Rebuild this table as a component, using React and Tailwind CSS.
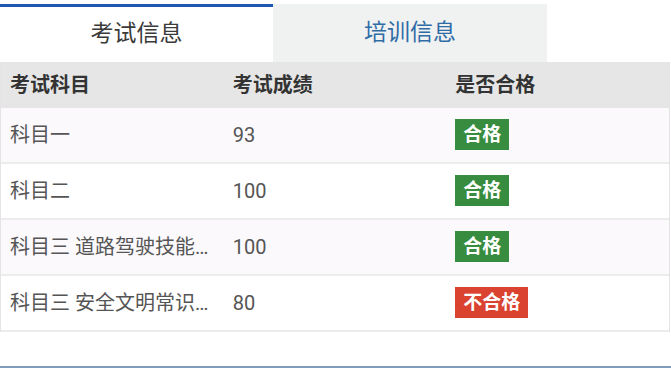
import React from 'react'

const rows = [
  { name: '科目一', score: '93', pass: true },
  { name: '科目二', score: '100', pass: true },
  { name: '科目三 道路驾驶技能考试', score: '100', pass: true },
  { name: '科目三 安全文明常识考试', score: '80', pass: false },
]

function Badge({ pass }) {
  return pass ? (
    <span className="inline-block h-[31px] leading-[31px] px-2 bg-[#378c3f] text-white text-[19px] font-bold">合格</span>
  ) : (
    <span className="inline-block h-[31px] leading-[31px] px-2 bg-[#d9432f] text-white text-[19px] font-bold">不合格</span>
  )
}

export default function App() {
  return (
    <div
      className="w-[671px] h-[368px] bg-white flex flex-col overflow-hidden"
      style={{ fontFamily: 'Roboto, "Noto Sans CJK SC", sans-serif' }}
    >
      <div className="h-[4px] bg-white" />
      <div className="flex h-[58px]">
        <div className="w-[273px] border-t-[3px] border-[#1f56b3] bg-white flex items-center justify-center text-[23px] text-[#3a3a3a]">
          考试信息
        </div>
        <div className="w-[274px] bg-[#f0f1f1] flex items-center justify-center text-[23px] text-[#2f6ca6]">
          培训信息
        </div>
      </div>

      <div className="w-[670px] border-x border-[#e4e4e4]">
        <div className="grid grid-cols-3 h-[46px] bg-[#e6e6e6] items-center text-[20px] font-bold text-[#333]">
          <div className="pl-[9px]">考试科目</div>
          <div className="pl-[9px]">考试成绩</div>
          <div className="pl-[9px]">是否合格</div>
        </div>
        {rows.map((r, i) => (
          <div
            key={i}
            className={
              'grid grid-cols-3 h-[56px] items-center border-b-2 border-[#ececec] text-[20px] text-[#555] ' +
              (i % 2 === 0 ? 'bg-[#fbf9fc]' : 'bg-white')
            }
          >
            <div className="pl-[9px] pr-[10px] truncate">{r.name}</div>
            <div className="pl-[9px]">{r.score}</div>
            <div className="pl-[9px] pb-[2px]">
              <Badge pass={r.pass} />
            </div>
          </div>
        ))}
      </div>

      <div className="flex-1" />
      <div className="h-[2px] bg-[#7f9cbb]" />
    </div>
  )
}
